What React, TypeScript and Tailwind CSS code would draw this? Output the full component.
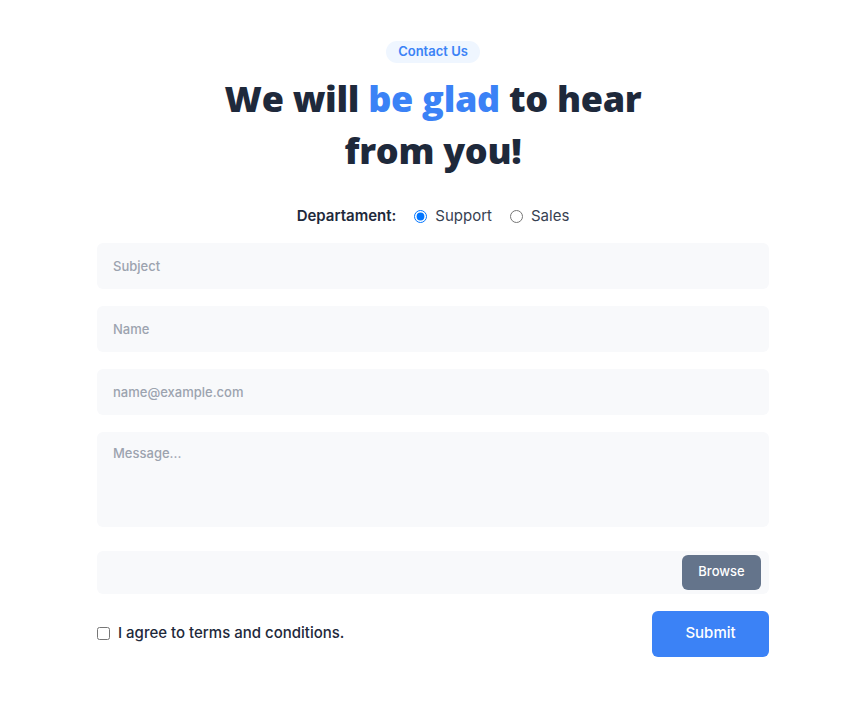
import React, { useState } from "react";

const body = { fontFamily: "Inter, 'Open Sans', sans-serif" };

const Field = ({ placeholder }: { placeholder: string }) => {
  return (
    <input
      type="text"
      placeholder={placeholder}
      className="h-[46px] w-full rounded-md bg-[#f8f9fb] px-4 text-[13px] font-medium text-gray-700 outline-none placeholder:text-[#9ca3af]"
    />
  );
};

const App = () => {
  const [dept, setDept] = useState("support");

  return (
    <div className="min-h-screen bg-white text-[#1e293b]" style={body}>
      <div className="flex justify-center pl-[15px] pt-[41px]">
        <div className="flex w-[672px] flex-col items-center">
          <span className="flex h-[22px] items-center rounded-full bg-[#eff6ff] px-3 text-[13px] font-semibold text-[#3b82f6]">
            Contact Us
          </span>
          <h1
            className="mt-[10px] text-center text-[36px] font-extrabold leading-[52px] tracking-[-0.3px] text-[#1e293b]"
            style={{ fontFamily: "'Open Sans', 'DejaVu Sans', sans-serif" }}
          >
            We will <span className="text-[#3b82f6]">be glad</span> to hear
            <br />
            from you!
          </h1>

          <div className="mt-[28px] flex items-center text-[15px]">
            <span className="mr-[18px] font-semibold text-[#1e293b]">Departament:</span>
            <label className="mr-[18px] flex items-center gap-[8px] text-[#374151]">
              <input
                type="radio"
                name="dept"
                checked={dept === "support"}
                onChange={() => setDept("support")}
                className="h-[13px] w-[13px] accent-[#0075ff]"
              />
              Support
            </label>
            <label className="flex items-center gap-[8px] text-[#374151]">
              <input
                type="radio"
                name="dept"
                checked={dept === "sales"}
                onChange={() => setDept("sales")}
                className="h-[13px] w-[13px]"
              />
              Sales
            </label>
          </div>

          <div className="mt-[15px] flex w-full flex-col gap-[17px]">
            <Field placeholder="Subject" />
            <Field placeholder="Name" />
            <Field placeholder="name@example.com" />
            <textarea
              placeholder="Message..."
              className="h-[95px] w-full resize-none rounded-md bg-[#f8f9fb] px-4 pt-[12px] text-[13px] font-medium text-gray-700 outline-none placeholder:text-[#9ca3af]"
            />
          </div>

          <div className="mt-[24px] flex h-[43px] w-full items-center justify-end rounded-md bg-[#f8f9fb] pr-[8px]">
            <button className="h-[35px] w-[79px] rounded-md bg-[#64748b] text-[13px] font-medium text-white">
              Browse
            </button>
          </div>

          <div className="mt-[17px] flex w-full items-center justify-between">
            <label className="flex items-center gap-[8px] text-[15px] font-medium text-[#1e293b]">
              <input type="checkbox" className="h-[13px] w-[13px]" />
              I agree to terms and conditions.
            </label>
            <button className="h-[46px] w-[117px] rounded-md bg-[#3b82f6] text-[15px] font-medium text-white">
              Submit
            </button>
          </div>
        </div>
      </div>
    </div>
  );
};

export default App;
